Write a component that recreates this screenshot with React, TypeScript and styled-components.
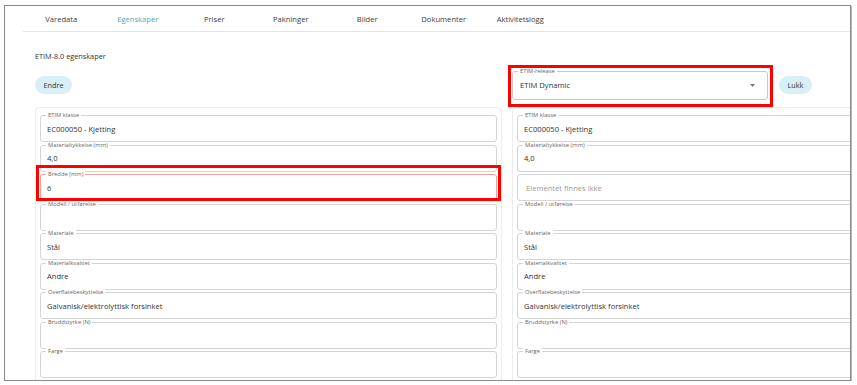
import React from 'react'
import styled, { createGlobalStyle } from 'styled-components'

type FieldData = { label?: string; value?: string; placeholder?: string; changed?: boolean; marked?: boolean }

const tabs = ['Varedata', 'Egenskaper', 'Priser', 'Pakninger', 'Bilder', 'Dokumenter', 'Aktivitetslogg']

const leftFields: FieldData[] = [
	{ label: 'ETIM klasse', value: 'EC000050 - Kjetting' },
	{ label: 'Materialtykkelse (mm)', value: '4,0' },
	{ label: 'Bredde (mm)', value: '6', changed: true, marked: true },
	{ label: 'Modell / utførelse', value: '' },
	{ label: 'Materiale', value: 'Stål' },
	{ label: 'Materialkvalitet', value: 'Andre' },
	{ label: 'Overflatebeskyttelse', value: 'Galvanisk/elektrolyttisk forsinket' },
	{ label: 'Bruddstyrke (N)', value: '' },
	{ label: 'Farge', value: '' },
]

const rightFields: FieldData[] = [
	{ label: 'ETIM klasse', value: 'EC000050 - Kjetting' },
	{ label: 'Materialtykkelse (mm)', value: '4,0' },
	{ placeholder: 'Elementet finnes ikke' },
	{ label: 'Modell / utførelse', value: '' },
	{ label: 'Materiale', value: 'Stål' },
	{ label: 'Materialkvalitet', value: 'Andre' },
	{ label: 'Overflatebeskyttelse', value: 'Galvanisk/elektrolyttisk forsinket' },
	{ label: 'Bruddstyrke (N)', value: '' },
	{ label: 'Farge', value: '' },
]

const Field = ({ label, value, placeholder, changed, marked }: FieldData) => {
	const box = (
		<FieldBox $changed={changed} $empty={!!placeholder}>
			{label && <FieldLabel>{label}</FieldLabel>}
			{placeholder ?? value}
		</FieldBox>
	)
	return marked ? <Marked $inset="-9px -4px 0 -4px">{box}</Marked> : box
}

const App = () => {
	return (
		<>
			<GlobalStyle />
			<Frame>
				<TabBar>
					{tabs.map(t => (
						<Tab key={t} $active={t === 'Egenskaper'}>{t}</Tab>
					))}
				</TabBar>
				<Content>
					<Title>ETIM-8.0 egenskaper</Title>
					<Columns>
						<Column>
							<Header>
								<Pill>Endre</Pill>
							</Header>
							<Card>
								{leftFields.map((f, i) => <Field key={i} {...f} />)}
							</Card>
						</Column>
						<Column>
							<Header>
								<Marked $inset="-6px -5px -7px -4px">
									<Select>
										<FieldLabel>ETIM-release</FieldLabel>
										ETIM Dynamic
										<svg width="5" height="3" viewBox="0 0 5 3">
											<path d="M0 0 L5 0 L2.5 3 Z" fill="#7a7a7a" />
										</svg>
									</Select>
								</Marked>
								<Pill>Lukk</Pill>
							</Header>
							<Card>
								{rightFields.map((f, i) => <Field key={i} {...f} />)}
							</Card>
						</Column>
					</Columns>
				</Content>
			</Frame>
		</>
	)
}

export default App

const GlobalStyle = createGlobalStyle`
	html, body {
		margin: 0;
		padding: 0;
		background: #fff;
		overflow: hidden;
	}
	body {
		font-family: "Open Sans", "Noto Sans", sans-serif;
		color: #333;
	}
`

const Frame = styled.div`
	box-sizing: border-box;
	margin: 5px 0 0 4px;
	width: 847px;
	height: 376px;
	border: 1px solid #8a8a8a;
	box-shadow: 1px 1px 0 #b8b8b8;
	overflow: hidden;
	background: #fff;
`

const TabBar = styled.nav`
	display: flex;
	height: 25px;
	margin-left: 18px;
	border-bottom: 1px solid #e6e6e6;
`

const Tab = styled.div<{ $active?: boolean }>`
	width: 76.5px;
	display: flex;
	align-items: center;
	justify-content: center;
	font-size: 7.6px;
	color: ${p => (p.$active ? '#47a9c6' : '#3c3c3c')};
	white-space: nowrap;
`

const Content = styled.section`
	padding: 19px 0 0 30px;
`

const Title = styled.div`
	font-size: 7.3px;
	line-height: 10px;
	color: #333;
`

const Columns = styled.div`
	display: grid;
	grid-template-columns: 467px 467px;
	column-gap: 10px;
	margin-top: 6px;
`

const Column = styled.div`
	display: flex;
	flex-direction: column;
`

const Header = styled.div`
	display: flex;
	align-items: center;
	gap: 11px;
	height: 36px;
	margin-bottom: 4px;
`

const Pill = styled.button`
	height: 18px;
	padding: 0 8.5px;
	border: none;
	border-radius: 9px;
	background: #d7eff6;
	font-family: inherit;
	font-size: 7.3px;
	color: #333;
`

const Marked = styled.div<{ $inset: string }>`
	position: relative;
	&::after {
		content: '';
		position: absolute;
		inset: ${p => p.$inset};
		border: 3px solid #f00;
		pointer-events: none;
	}
`

const Select = styled.div`
	position: relative;
	box-sizing: border-box;
	width: 256px;
	height: 29px;
	display: flex;
	align-items: center;
	justify-content: space-between;
	padding: 0 12px 0 7px;
	border: 1px solid #c9c9c9;
	border-radius: 3px;
	font-size: 7.6px;
	color: #333;
`

const Card = styled.div`
	display: flex;
	flex-direction: column;
	gap: 2.5px;
	padding: 7px 4px;
	border: 1px solid #ededed;
	border-radius: 4px;
`

const FieldBox = styled.div<{ $changed?: boolean; $empty?: boolean }>`
	position: relative;
	box-sizing: border-box;
	height: 27px;
	display: flex;
	align-items: center;
	padding: 0 ${p => (p.$empty ? 8 : 6)}px;
	border: 1px solid ${p => (p.$changed ? '#f3a395' : '#d4d4d4')};
	border-radius: 3px;
	font-size: 7.6px;
	color: ${p => (p.$empty ? '#9b9b9b' : '#333')};
	white-space: nowrap;
`

const FieldLabel = styled.span`
	position: absolute;
	top: -4px;
	left: 5px;
	padding: 0 2px;
	background: #fff;
	font-size: 5.8px;
	line-height: 7px;
	color: #666;
`
